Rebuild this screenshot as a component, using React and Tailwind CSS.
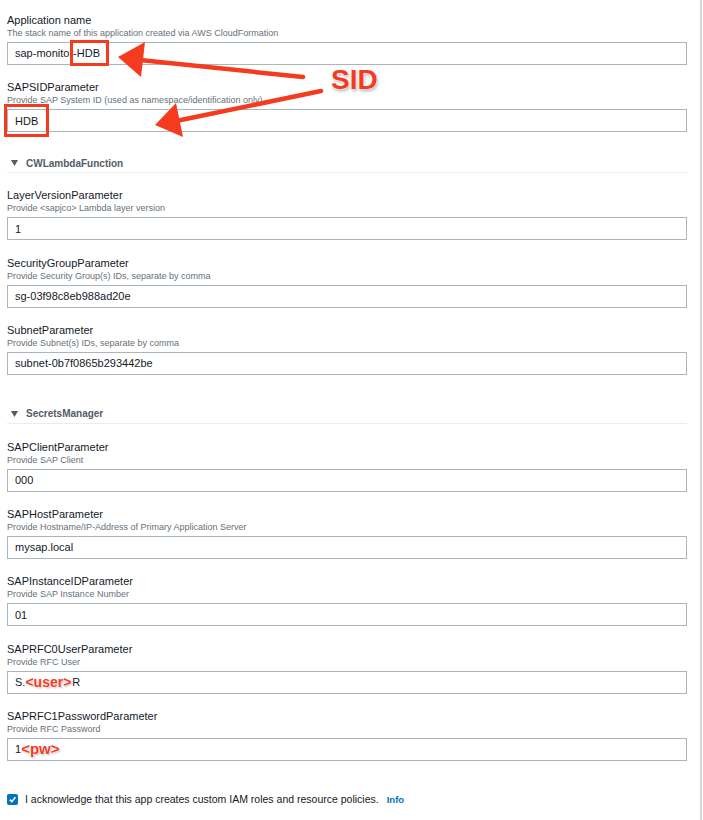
const red = '#f53b1f'

const lambdaFields = [
  { label: 'LayerVersionParameter', desc: 'Provide <sapjco> Lambda layer version', value: '1' },
  { label: 'SecurityGroupParameter', desc: 'Provide Security Group(s) IDs, separate by comma', value: 'sg-03f98c8eb988ad20e' },
  { label: 'SubnetParameter', desc: 'Provide Subnet(s) IDs, separate by comma', value: 'subnet-0b7f0865b293442be' },
]

function Tag({ children, className = '' }) {
  return (
    <span className={`font-bold text-[#f53b1f] [text-shadow:0_0_2px_#fff,0_0_2px_#fff,1px_1px_2px_rgba(0,0,0,0.35)] ${className}`}>
      {children}
    </span>
  )
}

function Field({ label, desc, value, first }) {
  return (
    <div className={first ? '' : 'mt-[15.3px]'}>
      <div className="h-[14px] text-[11px] leading-[14px] text-[#16191f]">{label}</div>
      <div className="h-[12px] text-[9px] leading-[12px] text-[#687078]">{desc}</div>
      <div className="mt-[3px] h-[23px] border border-[#aab7b8] bg-white pl-[7px] flex items-center text-[11px] text-[#16191f] whitespace-nowrap">
        {value}
      </div>
    </div>
  )
}

function Section({ title, className = '' }) {
  return (
    <div className={`h-[19px] flex items-center gap-[8px] pl-[4px] border-b border-[#eaeded] ${className}`}>
      <svg width="7" height="6" viewBox="0 0 7 6"><polygon points="0,0 7,0 3.5,6" fill="#545b64" /></svg>
      <span className="text-[10px] font-bold text-[#545b64]">{title}</span>
    </div>
  )
}

function Overlay() {
  return (
    <svg className="absolute inset-0 pointer-events-none" width="703" height="820" viewBox="0 0 703 820">
      <rect x="71.5" y="41.5" width="36" height="23" fill="none" stroke={red} strokeWidth="3" />
      <rect x="5.5" y="105.5" width="42" height="30" fill="none" stroke={red} strokeWidth="3" />
      <line x1="303" y1="77" x2="140" y2="60" stroke={red} strokeWidth="4.5" strokeLinecap="round" />
      <polygon points="118,57 145,42 141,77" fill={red} />
      <line x1="321" y1="91" x2="176" y2="121" stroke={red} strokeWidth="4.5" strokeLinecap="round" />
      <polygon points="155,125 176,103 183,137" fill={red} />
    </svg>
  )
}

export default function App() {
  return (
    <div className="relative w-[703px] h-[820px] bg-white font-['Liberation_Sans',Arial,sans-serif] overflow-hidden">
      <div className="w-[702px] h-full border-r-2 border-[#d5d8d8] pl-[7px] pr-[13px] pt-[13px]">
        <Field first label="Application name" desc="The stack name of this application created via AWS CloudFormation" value="sap-monitor-HDB" />
        <Field label="SAPSIDParameter" desc="Provide SAP System ID (used as namespace/identification only)" value="HDB" />

        <Section title="CWLambdaFunction" className="mt-[22px]" />
        <div className="mt-[15px]">
          {lambdaFields.map((f, i) => <Field key={f.label} first={i === 0} {...f} />)}
        </div>

        <Section title="SecretsManager" className="mt-[30px]" />
        <div className="mt-[16px]">
          <Field first label="SAPClientParameter" desc="Provide SAP Client" value="000" />
          <Field label="SAPHostParameter" desc="Provide Hostname/IP-Address of Primary Application Server" value="mysap.local" />
          <Field label="SAPInstanceIDParameter" desc="Provide SAP Instance Number" value="01" />
          <Field label="SAPRFC0UserParameter" desc="Provide RFC User"
            value={<><span>S.</span><Tag className="text-[14px]">&lt;user&gt;</Tag><span className="ml-[1px]">R</span></>} />
          <Field label="SAPRFC1PasswordParameter" desc="Provide RFC Password"
            value={<><span>1</span><Tag className="text-[15px]">&lt;pw&gt;</Tag></>} />
        </div>

        {/* acknowledge */}
        <div className="mt-[31px] flex items-center gap-[7px]">
          <span className="w-[11px] h-[11px] rounded-[2px] bg-[#0073bb] flex items-center justify-center">
            <svg width="9" height="9" viewBox="0 0 10 10"><path d="M2 5.2 L4.2 7.4 L8.2 2.6" fill="none" stroke="#fff" strokeWidth="1.8" /></svg>
          </span>
          <span className="text-[10.5px] text-[#16191f]">I acknowledge that this app creates custom IAM roles and resource policies.</span>
          <span className="ml-[1px] text-[9.5px] font-bold text-[#0073bb]">Info</span>
        </div>
      </div>

      <Overlay />
      <div className="absolute left-[331px] top-[64px] text-[28px] leading-[32px] font-bold text-[#f53b1f] [text-shadow:0_0_2px_#fff,0_0_3px_#fff,1px_2px_3px_rgba(0,0,0,0.35)]">
        SID
      </div>
    </div>
  )
}
